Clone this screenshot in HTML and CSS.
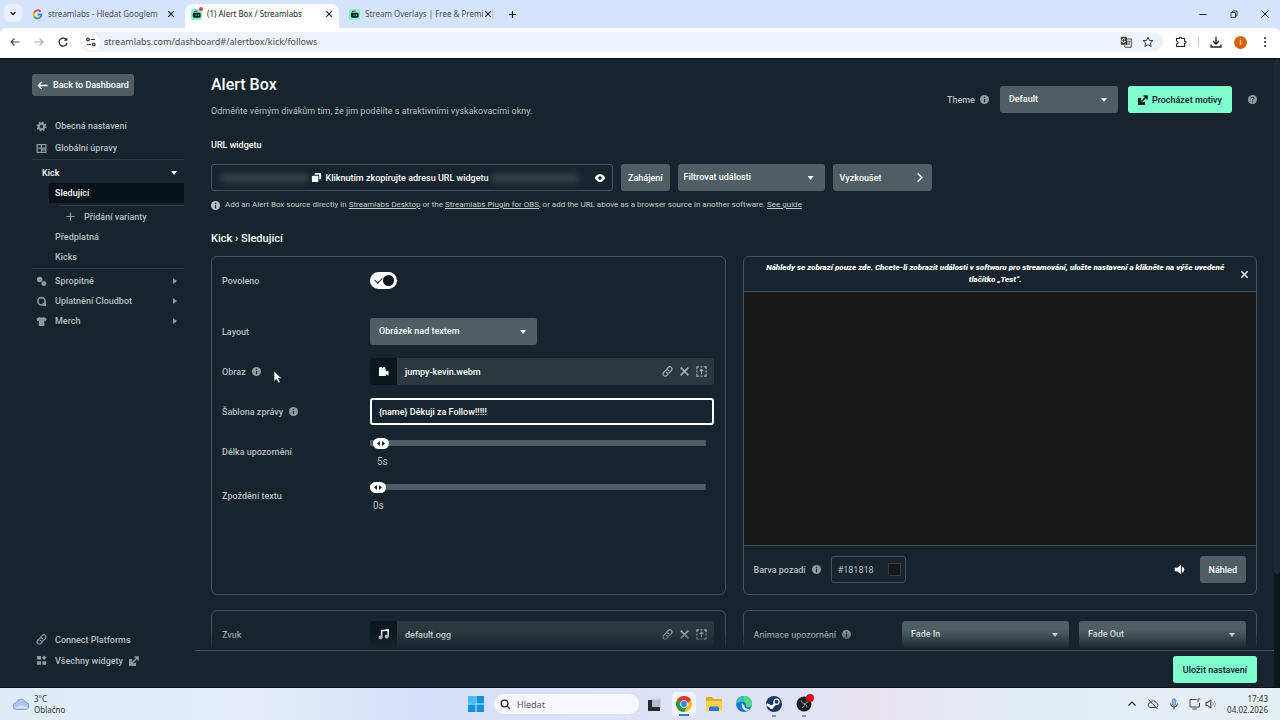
FILE: index.html
```html
<!DOCTYPE html>
<html lang="cs">
<head>
<meta charset="utf-8">
<title>Alert Box / Streamlabs</title>
<meta name="viewport" content="width=device-width, initial-scale=1">
<link rel="stylesheet" href="styles.css">
</head>
<body>
<svg class="defs" aria-hidden="true">
  <symbol id="i-x" viewBox="0 0 10 10"><path d="M1.500 1.500l7 7M8.500 1.500l-7 7" fill="none" stroke="currentColor" stroke-width="1.500"/></symbol>
  <symbol id="i-info" viewBox="0 0 10 10"><circle cx="5" cy="5" r="5" fill="currentColor"/><path d="M5 4.300V8M5 2v1.400" stroke="#17242d" stroke-width="1.300"/></symbol>
  <symbol id="i-link" viewBox="0 0 12 12"><g fill="none" stroke="currentColor" stroke-width="1.300" stroke-linecap="round"><path d="M5.200 3.200l1.500-1.500a2.300 2.300 0 0 1 3.500 3.200L8 7.200a2.300 2.300 0 0 1-3.300-.3"/><path d="M6.800 8.800l-1.500 1.500a2.300 2.300 0 0 1-3.500-3.200L4 4.800a2.300 2.300 0 0 1 3.300.3"/></g></symbol>
  <symbol id="i-ext" viewBox="0 0 10 10"><path d="M0 3h3.500L2.500 5.500l2 2L7 6.500V10H0z" fill="currentColor"/><path d="M3.500 6.500L8.500 1.500M5.500 1H9v3.500" fill="none" stroke="currentColor" stroke-width="1.500"/></symbol>
  <symbol id="i-frame" viewBox="0 0 12 12"><path d="M1 3.500V1h2.500M5 1h2M8.500 1H11v2.500M11 5v2M11 8.500V11H8.500M7 11H5M3.500 11H1V8.500M1 7V5" fill="none" stroke="currentColor" stroke-width="1.300"/><path d="M6 9V4M4 5.500L6 3.500l2 2" fill="none" stroke="currentColor" stroke-width="1.200"/></symbol>
  <symbol id="i-streamlabs" viewBox="0 0 12 12"><rect width="12" height="12" rx="2" fill="#7ff7cb"/><rect x="2" y="4" width="8.500" height="5.500" rx="1.500" fill="#0c1c22"/><path d="M3 3.500q1-1.500 4-1.200" fill="none" stroke="#0c1c22" stroke-width="1"/><path d="M5.500 6v1.500M8 6v1.500" stroke="#7ff7cb"/></symbol>
</svg>

<header class="browser">
  <div class="tabstrip">
    <button class="tab-search" aria-label="Hledat karty"><svg viewBox="0 0 10 10"><path d="M2.500 4L5 6.500 7.500 4" fill="none" stroke="#222" stroke-width="1.400"/></svg></button>
    <div class="tab tab-google">
      <svg class="favicon" viewBox="0 0 12 12"><g fill="none" stroke-width="2"><path d="M9.500 3A4.200 4.200 0 0 0 2.300 4" stroke="#ea4335"/><path d="M2.300 4a4.200 4.200 0 0 0 0 4" stroke="#fbbc05"/><path d="M2.300 8a4.200 4.200 0 0 0 6.400 1.300" stroke="#34a853"/><path d="M8.700 9.300A4.200 4.200 0 0 0 10.200 6H6" stroke="#4285f4"/></g></svg>
      <span class="tab-title">streamlabs - Hledat Googlem</span>
      <button class="tab-close" aria-label="Zavřít kartu"><svg><use href="#i-x"/></svg></button>
    </div>
    <div class="tab tab-active">
      <span class="favicon badge-host"><svg class="favicon"><use href="#i-streamlabs"/></svg><i class="fav-badge"></i></span>
      <span class="tab-title">(1) Alert Box / Streamlabs</span>
      <button class="tab-close" aria-label="Zavřít kartu"><svg><use href="#i-x"/></svg></button>
    </div>
    <div class="tab tab-third">
      <svg class="favicon"><use href="#i-streamlabs"/></svg>
      <span class="tab-title">Stream Overlays | Free &amp; Premi</span>
      <button class="tab-close" aria-label="Zavřít kartu"><svg><use href="#i-x"/></svg></button>
    </div>
    <button class="new-tab" aria-label="Nová karta"><svg viewBox="0 0 10 10"><path d="M5 1v8M1 5h8" stroke="#222" stroke-width="1.300"/></svg></button>
    <div class="window-buttons">
      <button aria-label="Minimalizovat"><svg viewBox="0 0 10 10"><path d="M1.500 5.500h7" stroke="#222"/></svg></button>
      <button aria-label="Obnovit"><svg viewBox="0 0 10 10"><path d="M2 3.500h4.500V8.500H2zM3.500 3.500V2H8v5H6.500" fill="none" stroke="#222" stroke-width=".8"/></svg></button>
      <button aria-label="Zavřít"><svg viewBox="0 0 10 10"><path d="M1.500 1.500l7 7M8.500 1.500l-7 7" stroke="#222"/></svg></button>
    </div>
  </div>
  <div class="toolbar">
    <button aria-label="Zpět"><svg viewBox="0 0 12 12"><path d="M10.500 6H2M5.500 2.500L2 6l3.500 3.500" fill="none" stroke="#444" stroke-width="1.200"/></svg></button>
    <button aria-label="Vpřed"><svg viewBox="0 0 12 12"><path d="M1.500 6H10M6.500 2.500L10 6 6.500 9.500" fill="none" stroke="#a9abb0" stroke-width="1.100"/></svg></button>
    <button aria-label="Načíst znovu"><svg viewBox="0 0 12 12"><path d="M9.500 4A4 4 0 1 0 10 7" fill="none" stroke="#222" stroke-width="1.300"/><path d="M10.300 1.500v3.300H7z" fill="#222"/></svg></button>
    <div class="omnibox">
      <button class="site-info" aria-label="Informace o webu"><svg viewBox="0 0 12 12"><g fill="none" stroke="#333" stroke-width="1.200"><circle cx="3" cy="3.500" r="1.300"/><path d="M5.800 3.500H10M2 8.500h4"/><circle cx="8.800" cy="8.500" r="1.300"/></g></svg></button>
      <input class="address" aria-label="Adresa" value="streamlabs.com/dashboard#/alertbox/kick/follows">
      <button aria-label="Přeložit"><svg viewBox="0 0 12 12"><path d="M.8.8h6l1 8h-7z" fill="#444"/><path d="M7 3h4.300v8.300H5l-.5-2" fill="none" stroke="#555"/><path d="M5 3.500A1.800 1.800 0 1 0 5.300 5.300H4" fill="none" stroke="#fff" stroke-width=".9"/><path d="M7.500 5.500h3M9 4.500v1M10 5.500L8 9M8.200 6.500l2 2.500" fill="none" stroke="#555" stroke-width=".7"/></svg></button>
      <button aria-label="Přidat záložku"><svg viewBox="0 0 12 12"><path d="M6 1.200l1.400 3.200 3.500.3-2.600 2.300.8 3.500L6 8.700l-3.100 1.800.8-3.500L1.100 4.700l3.500-.3z" fill="none" stroke="#333"/></svg></button>
    </div>
    <button class="tool-ext" aria-label="Rozšíření"><svg viewBox="0 0 12 12"><path d="M1.500 2.500h3q0-1.500 1-1.500t1 1.500H9.500v2.700q1.700 0 1.700 1.100T9.500 7.500v3h-8V8q1.600-.2 1.600-1.500T1.500 5z" fill="none" stroke="#222" stroke-width="1.100"/></svg></button>
    <span class="tool-sep"></span>
    <button aria-label="Stahování"><svg viewBox="0 0 12 12"><path d="M6 .8v7M3 5l3 3 3-3M1 8.500V11h10V8.500" fill="none" stroke="#222" stroke-width="1.300"/></svg></button>
    <button class="avatar" aria-label="Profil">i</button>
    <button aria-label="Nabídka"><svg viewBox="0 0 12 12"><g fill="#222"><circle cx="6" cy="2" r="1"/><circle cx="6" cy="6" r="1"/><circle cx="6" cy="10" r="1"/></g></svg></button>
  </div>
</header>

<div class="app">
  <aside class="sidebar">
    <button class="btn back-btn"><svg class="ic" viewBox="0 0 12 12"><path d="M11.500 6H1.500M5 2.300L1.500 6 5 9.700" fill="none" stroke="currentColor" stroke-width="1.500"/></svg>Back to Dashboard</button>
    <nav class="nav">
      <a class="nav-item nav-top" href="#"><svg class="ic" viewBox="0 0 12 12"><circle cx="6" cy="6" r="3" fill="none" stroke="currentColor" stroke-width="2.400"/><circle cx="6" cy="6" r="4.700" fill="none" stroke="currentColor" stroke-width="1.500" stroke-dasharray="1.850 1.840"/></svg>Obecná nastavení</a>
      <a class="nav-item nav-top" href="#"><svg class="ic" viewBox="0 0 12 12"><path d="M1.200 1.700h9.600v8.600H1.200zM6 1.700v8.600M1.200 5.500h9.600M6 7.500h4.500" fill="none" stroke="currentColor" stroke-width="1.300"/></svg>Globální úpravy</a>
      <div class="nav-group">
        <a class="nav-item nav-head" href="#">Kick<i class="caret-down"></i></a>
        <div class="nav-sub">
          <a class="nav-item nav-current" href="#">Sledující</a>
          <a class="nav-item nav-variant" href="#"><svg class="ic" viewBox="0 0 12 12"><path d="M6 1.500v9M1.500 6h9" stroke="currentColor" stroke-width="1.300"/></svg>Přidání varianty</a>
          <a class="nav-item" href="#">Předplatná</a>
          <a class="nav-item" href="#">Kicks</a>
        </div>
      </div>
      <a class="nav-item" href="#"><svg class="ic" viewBox="0 0 12 12"><circle cx="4" cy="3.800" r="3" fill="currentColor"/><circle cx="8.500" cy="8.300" r="3" fill="currentColor" stroke="#17242d" stroke-width=".6"/></svg>Spropitné<i class="caret-right"></i></a>
      <a class="nav-item" href="#"><svg class="ic" viewBox="0 0 12 12"><circle cx="6" cy="5.800" r="4" fill="none" stroke="currentColor" stroke-width="1.800"/><path d="M7 7.500h4v3.500H8z" fill="currentColor"/></svg>Uplatnění Cloudbot<i class="caret-right"></i></a>
      <a class="nav-item" href="#"><svg class="ic" viewBox="0 0 12 12"><path d="M4 1q2 1.500 4 0l3.500 1.800-1 3L9 5.300V11H3V5.300l-1.500.5-1-3z" fill="currentColor"/></svg>Merch<i class="caret-right"></i></a>
    </nav>
    <nav class="nav nav-bottom">
      <a class="nav-item nav-low" href="#"><svg class="ic"><use href="#i-link"/></svg>Connect Platforms</a>
      <a class="nav-item nav-low" href="#"><svg class="ic" viewBox="0 0 12 12"><path d="M1 1h4.500v4H1zM9 .5L11.500 3 9 5.500 6.500 3zM1 6.700h4.500v4H1zM7 6.700h4v4H7z" fill="currentColor"/></svg>Všechny widgety<svg class="ic ic-ext"><use href="#i-ext"/></svg></a>
    </nav>
  </aside>

  <main class="main">
    <div class="content">
      <div class="head">
        <div>
          <h1>Alert Box</h1>
          <p class="subtitle">Odměňte věrným divákům tím, že jim podělíte s atraktivními vyskakovacími okny.</p>
        </div>
        <div class="theme">
          <label class="label" for="theme">Theme</label><svg class="info"><use href="#i-info"/></svg>
          <span class="select select-theme"><select id="theme"><option>Default</option></select></span>
          <button class="btn btn-green"><svg class="ic-small"><use href="#i-ext"/></svg>Procházet motivy</button>
          <svg class="info help" viewBox="0 0 10 10"><circle cx="5" cy="5" r="5" fill="currentColor"/><path d="M3.500 4q0-1.600 1.500-1.600T6.500 3.800Q6.500 4.600 5 5.300v.7M5 7v1.200" fill="none" stroke="#17242d" stroke-width="1.100"/></svg>
        </div>
      </div>

      <h2 class="field-title">URL widgetu</h2>
      <div class="url-row">
        <div class="url-box">
          <span class="smudge"></span>
          <button class="copy"><svg class="ic" viewBox="0 0 12 12"><path d="M4 1h7v7H9V3H4z" fill="currentColor"/><rect x="1" y="4" width="7" height="7" rx="1" fill="currentColor"/></svg>Kliknutím zkopírujte adresu URL widgetu</button>
          <span class="smudge"></span>
          <button class="eye" aria-label="Zobrazit"><svg viewBox="0 0 12 12"><path d="M.8 6Q3 2 6 2t5.200 4Q9 10 6 10T.8 6z" fill="#fff"/><circle cx="6" cy="6" r="1.800" fill="#17242d"/></svg></button>
        </div>
        <button class="btn">Zahájení</button>
        <span class="select select-filter"><select aria-label="Filtrovat události"><option>Filtrovat události</option></select></span>
        <button class="btn btn-try">Vyzkoušet<svg class="ic" viewBox="0 0 12 12"><path d="M4 1.500L8.500 6 4 10.500" fill="none" stroke="currentColor" stroke-width="1.600"/></svg></button>
      </div>
      <p class="hint"><svg class="info"><use href="#i-info"/></svg><span>Add an Alert Box source directly in <a href="#">Streamlabs Desktop</a> or the <a href="#">Streamlabs Plugin for OBS</a>, or add the URL above as a browser source in another software. <a href="#">See guide</a></span></p>

      <h2 class="crumbs">Kick › Sledující</h2>

      <div class="cards">
        <section class="card settings">
          <label class="label" for="enabled">Povoleno</label>
          <div class="row-enabled"><input id="enabled" class="toggle" type="checkbox" checked></div>
          <label class="label" for="layout">Layout</label>
          <div><span class="select select-layout"><select id="layout"><option>Obrázek nad textem</option></select></span></div>
          <div class="label">Obraz<svg class="info"><use href="#i-info"/></svg></div>
          <div class="file">
            <span class="file-type"><svg class="ic" viewBox="0 0 12 12"><circle cx="3" cy="2.500" r="1.800" fill="#fff"/><circle cx="6.500" cy="2.500" r="1.500" fill="#fff"/><path d="M1 3.500h7.500v2.500L11.500 4.800v5.500L8.500 9v2H1z" fill="#fff"/></svg></span>
            <span class="file-name">jumpy-kevin.webm</span>
            <button aria-label="Odkaz"><svg><use href="#i-link"/></svg></button>
            <button aria-label="Odebrat"><svg><use href="#i-x"/></svg></button>
            <button aria-label="Vybrat"><svg><use href="#i-frame"/></svg></button>
          </div>
          <div class="label"><label for="template">Šablona zprávy</label><svg class="info"><use href="#i-info"/></svg></div>
          <div><input id="template" class="text-input" value="{name} Děkuji za Follow!!!!!" spellcheck="false"></div>
          <label class="label" for="duration">Délka upozornění</label>
          <div class="slide"><input id="duration" type="range" min="2" max="300" value="5"><output class="val-duration">5s</output></div>
          <label class="label" for="delay">Zpoždění textu</label>
          <div class="slide"><input id="delay" type="range" min="0" max="60" value="0"><output>0s</output></div>
        </section>

        <section class="card preview">
          <div class="preview-note"><em>Náhledy se zobrazí pouze zde. Chcete-li zobrazit události v softwaru pro streamování, uložte nastavení a klikněte na výše uvedené tlačítko „Test“.</em><button aria-label="Zavřít"><svg><use href="#i-x"/></svg></button></div>
          <div class="preview-canvas"></div>
          <div class="preview-bar">
            <label class="label" for="bg">Barva pozadí</label><svg class="info"><use href="#i-info"/></svg>
            <span class="color-box"><input id="bg" value="#181818"><i class="swatch"></i></span>
            <button class="sound" aria-label="Zvuk"><svg viewBox="0 0 12 12"><path d="M.8 4h2.700L7.500.8v10.400L3.500 8H.8z" fill="#fff"/><path d="M8.500 2.500q2.700.8 2.700 3.500T8.500 9.500z" fill="#fff"/></svg></button>
            <button class="btn">Náhled</button>
          </div>
        </section>

        <section class="card settings">
          <div class="label">Zvuk</div>
          <div class="file">
            <span class="file-type"><svg class="ic" viewBox="0 0 12 12"><path d="M4 9.300V1.800L11 1v7.500" fill="none" stroke="#fff" stroke-width="1.800"/><circle cx="2.800" cy="9.200" r="2.200" fill="#fff"/><circle cx="9.500" cy="8.500" r="2.200" fill="#fff"/></svg></span>
            <span class="file-name">default.ogg</span>
            <button aria-label="Odkaz"><svg><use href="#i-link"/></svg></button>
            <button aria-label="Odebrat"><svg><use href="#i-x"/></svg></button>
            <button aria-label="Vybrat"><svg><use href="#i-frame"/></svg></button>
          </div>
        </section>

        <section class="card animation">
          <div class="label">Animace upozornění<svg class="info"><use href="#i-info"/></svg></div>
          <span class="select"><select aria-label="Animace zobrazení"><option>Fade In</option></select></span>
          <span class="select"><select aria-label="Animace skrytí"><option>Fade Out</option></select></span>
        </section>
      </div>
    </div>
    <footer class="savebar"><button class="btn btn-green">Uložit nastavení</button></footer>
  </main>
  <div class="scrollbar"><i></i></div>
  <svg class="cursor" viewBox="0 0 10 14"><path d="M1 1v10.500l2.500-2.300L5.200 13l2-.9-1.700-3.600H9z" fill="#fff" stroke="#222" stroke-width=".7"/></svg>
</div>

<footer class="taskbar">
  <div class="weather">
    <svg viewBox="0 0 18 14"><path d="M4.500 12.500a3.500 3.500 0 0 1 0-7A4.800 4.800 0 0 1 13.500 5a3.800 3.800 0 0 1 .3 7.500z" fill="#a9c4ee" stroke="#86a5d8"/><path d="M3 10.500q5-3.500 12.500-1v2H4z" fill="#cfdffa"/></svg>
    <p>3°C<br>Oblačno</p>
  </div>
  <div class="dock">
    <button class="app-icon" aria-label="Start"><svg viewBox="0 0 16 16"><path d="M0 0h7.500v7.500H0zM8.500 0H16v7.500H8.500zM0 8.500h7.500V16H0zM8.500 8.500H16V16H8.500z" fill="#1593d9"/><path d="M0 0h7.500v7.500H0z" fill="#46bdf0"/></svg></button>
    <label class="search"><svg viewBox="0 0 12 12"><circle cx="5" cy="5" r="3.700" fill="none" stroke="#222" stroke-width="1.400"/><path d="M7.800 7.800L11 11" stroke="#222" stroke-width="1.400"/></svg><input placeholder="Hledat" aria-label="Hledat"></label>
    <button class="app-icon" aria-label="Zobrazení úloh"><svg viewBox="0 0 16 16"><rect x="5" y="2" width="10" height="9" fill="#d3d5d8"/><path d="M2 4h4v7h8v4H2z" fill="#222a33"/><rect x="6" y="4" width="8" height="7" fill="#b9bcc2"/></svg></button>
    <button class="app-icon app-chrome" aria-label="Chrome"><svg viewBox="0 0 16 16"><circle cx="8" cy="8" r="8" fill="#fbc116"/><path d="M8 8L1.100 4A8 8 0 0 1 14.900 4z" fill="#dc3b2e"/><path d="M8 8L1.100 4A8 8 0 0 0 8 16L11.500 10z" fill="#279847"/><path d="M4.500 5.500L8 4h6.900L12 7z" fill="#dc3b2e"/><circle cx="8" cy="8" r="3.800" fill="#fff"/><circle cx="8" cy="8" r="2.900" fill="#3f7ee8"/></svg></button>
    <button class="app-icon" aria-label="Průzkumník"><svg viewBox="0 0 16 16"><path d="M0 2q0-1 1-1h4.500l2 2H15q1 0 1 1v10H0z" fill="#e5ab22"/><path d="M0 5h16v9q0 1-1 1H1q-1 0-1-1z" fill="#fbd24f"/><path d="M3 15v-3q0-1.500 1.500-1.500h7Q13 10.500 13 12v3z" fill="#2a78c9"/></svg></button>
    <button class="app-icon" aria-label="Edge"><svg viewBox="0 0 16 16"><circle cx="8" cy="8" r="8" fill="#1479cc"/><path d="M0 8a8 8 0 0 1 16 0q0 3-3.500 3-2.500 0-2.500-1.300Q10.500 6 7.500 5.700 3 5.300 0 8z" fill="#35c5b8"/><path d="M8 0a8 8 0 0 1 8 8q0 3-3.500 3-2.500 0-2.500-1.300 1-3-2-4z" fill="#5bd982"/><path d="M6 7q-1.500 5 3 7.500 3 .8 5.300-1.500-5 1-6-3.500z" fill="#d7e3f7"/></svg></button>
    <button class="app-icon app-running" aria-label="Steam"><svg viewBox="0 0 16 16"><circle cx="8" cy="8" r="8" fill="#163861"/><path d="M.5 8.500L6 11 9 8" fill="none" stroke="#fff" stroke-width="2.500"/><circle cx="10.500" cy="5.800" r="2.600" fill="#163861" stroke="#fff" stroke-width="1.300"/><circle cx="5.500" cy="11" r="2" fill="#fff"/></svg></button>
    <button class="app-icon app-running badge-host" aria-label="OBS"><svg viewBox="0 0 16 16"><circle cx="8" cy="8" r="7.500" fill="#1d1c1f"/><path d="M5 4.500q1 3 3.500 3T12 5.500M8.500 7.500Q9 11 6 12M8.500 7.500q2.500 1.500 2.500 4" fill="none" stroke="#a5a5aa" stroke-width=".9"/></svg><i class="obs-badge"></i></button>
  </div>
  <div class="tray">
    <svg viewBox="0 0 12 12"><path d="M2.500 7.500L6 4l3.500 3.500" fill="none" stroke="#222" stroke-width="1.200"/></svg>
    <svg viewBox="0 0 12 12"><path d="M3 9.500A2.500 2.500 0 0 1 3 4.700Q4 2.500 6.500 2.700T9.300 5Q11.300 5.500 11 7.500T9 9.500zM1.500 1.500l9 9.500" fill="none" stroke="#444"/></svg>
    <svg viewBox="0 0 12 12"><rect x="4.300" y=".8" width="3.400" height="6.500" rx="1.700" fill="#8ab6ec" stroke="#3b7cc4" stroke-width=".8"/><path d="M2.500 5.500Q2.700 9 6 9t3.500-3.500M6 9v2.500" fill="none" stroke="#333"/></svg>
    <svg viewBox="0 0 12 12"><path d="M7.500 1.500H1v7.500h9.500V5M3.500 11h4.500M9 4V1h2.500" fill="none" stroke="#444"/></svg>
    <svg viewBox="0 0 12 12"><path d="M1 4.300h2L5.800 2v8L3 7.700H1z" fill="none" stroke="#333"/><path d="M7.500 4.300q1.300 1.700 0 3.400M9.200 2.800q2.500 3.200 0 6.400" fill="none" stroke="#999"/></svg>
    <p class="clock">17:43<br>04.02.2026</p>
  </div>
</footer>
</body>
</html>
```
FILE: styles.css
```css
* { box-sizing: border-box; }

:root {
  --bg: #17242d;
  --control: #4f5e65;
  --line: #43525a;
  --label: #b5bec2;
  --icon: #8f9a9f;
  --green: #80ffcf;
}

body {
  margin: 0;
  height: 100vh;
  display: flex;
  flex-direction: column;
  overflow: hidden;
  background: var(--bg);
  color: #fff;
  font: 9px/12px Roboto, "Liberation Sans", sans-serif;
}

.defs { display: none; }
button, input, select { font: inherit; color: inherit; }
button { border: 0; padding: 0; background: none; display: flex; align-items: center; justify-content: center; }
h1, h2, p { margin: 0; }
a { color: inherit; }
svg { display: block; flex: none; }

/* Browser window */
.browser { flex: none; background: #d6e3fc; color: #4b4f56; font: 8px/12px "Noto Sans", sans-serif; }
.tabstrip { display: flex; height: 28px; padding-left: 4px; }
.tab-search { width: 18px; height: 18px; margin: 4px 8px 0 0; border-radius: 6px; background: #e9f0fe; }
.tab-search svg { width: 10px; height: 10px; }
.tab { display: flex; align-items: center; width: 154px; }
.tab-google { width: 155px; padding: 0 9px 0 2px; }
.tab-active { margin-top: 4px; padding: 0 5px 4px 6px; background: #fff; border-radius: 8px 8px 0 0; color: #222; }
.tab-third { padding-left: 10px; border-right: 1px solid; border-image: linear-gradient(transparent 30%, #b4c3e0 30% 68%, transparent 68%) 1; }
.favicon { width: 11px; height: 11px; margin-right: 5px; flex: none; }
.badge-host { position: relative; }
.badge-host > .favicon { margin: 0; }
.fav-badge { position: absolute; top: -2px; right: -1px; width: 4px; height: 4px; border-radius: 50%; background: #e63c4c; }
.tab-title { flex: 1; white-space: nowrap; }
.tab-close { width: 10px; color: #222; }
.tab-close svg { width: 8px; height: 8px; }
.new-tab { width: 38px; }
.new-tab svg { width: 9px; height: 9px; }
.window-buttons { display: flex; margin-left: auto; }
.window-buttons button { width: 31px; }
.window-buttons svg { width: 10px; height: 10px; }

.toolbar { display: flex; align-items: center; height: 30px; padding: 0 3px 2px; background: #fff; border-radius: 6px 6px 0 0; }
.toolbar button { width: 24px; height: 20px; }
.toolbar button svg { width: 12px; height: 12px; }
.omnibox { flex: 1; display: flex; align-items: center; height: 20px; padding: 0 4px 0 2px; margin: 0 6px 0 5px; border-radius: 10px; background: #edf1fa; }
.omnibox button { width: 22px; }
.toolbar .site-info { width: 18px; height: 18px; border-radius: 50%; background: #fff; }
.address { flex: 1; min-width: 0; border: 0; padding: 0 0 0 4px; background: none; outline: 0; font-size: 9px; }
.tool-sep { width: 1px; height: 10px; margin: 0 5px; background: #b9c6dd; }
.toolbar .avatar { width: 13px; height: 13px; margin: 0 6px; border-radius: 50%; background: #d9600c; color: #fff; }

/* Application shell */
.app { position: relative; flex: 1; min-height: 0; display: flex; border-top: 1px solid #0a1218; border-bottom: 1px solid #0a1218; }
.sidebar { flex: none; width: 195px; padding: 15px 11px 16px 32px; display: flex; flex-direction: column; align-items: stretch; }
.main { flex: 1; min-width: 0; display: flex; flex-direction: column; }
.content { position: relative; flex: 1; min-height: 0; overflow: hidden; padding: 17px 17px 0 16px; }
.content::after { content: ""; position: absolute; left: 0; right: 0; bottom: 0; height: 20px; background: linear-gradient(transparent, var(--bg)); pointer-events: none; }
.savebar { flex: none; display: flex; justify-content: flex-end; padding: 5px 17px 4px; border-top: 1px solid var(--line); }
.scrollbar { flex: none; width: 6px; background: #0b161d; }
.scrollbar i { display: block; height: 82%; border-radius: 3px; background: #1b2932; }
.cursor { position: absolute; left: 273px; top: 311px; width: 10px; height: 14px; }

/* Shared controls */
.ic { width: 11px; height: 11px; }
.ic-small { width: 10px; height: 10px; }
.info { width: 9px; height: 9px; color: var(--icon); }
.btn { height: 27px; padding: 0 7px; border-radius: 3px; background: var(--control); font-weight: 500; white-space: nowrap; }
.btn-green { padding: 0 10px; gap: 4px; background: var(--green); color: #09161d; }
.label { display: flex; align-items: center; gap: 6px; color: var(--label); font-weight: 500; }
.select { position: relative; display: block; height: 27px; border-radius: 3px; background: var(--control); }
.select select { appearance: none; width: 100%; height: 25px; padding: 0 20px 0 9px; border: 0; background: none; color: #fff; font-weight: 500; }
.select::after, .caret-down { content: ""; width: 6px; height: 4px; background: #fff; clip-path: polygon(0 0, 100% 0, 50% 100%); }
.select::after { position: absolute; right: 11px; top: 12px; }

/* Sidebar */
.back-btn { align-self: flex-start; height: 22px; gap: 5px; padding: 0 5px; }
.nav { display: flex; flex-direction: column; margin-top: 19px; font-weight: 500; }
.nav-item { display: flex; align-items: center; height: 20px; padding: 0 7px 0 4px; gap: 8px; color: var(--label); text-decoration: none; }
.nav-item .ic { color: var(--icon); }
.nav-top { height: 22px; }
.nav-group { border-top: 1px solid #2e3c44; border-bottom: 1px solid #2e3c44; padding: 3px 0 1px; margin: 0 0 2px; }
.nav-head { padding-left: 10px; color: #fff; justify-content: space-between; }
.nav-sub { display: flex; flex-direction: column; padding-left: 17px; }
.nav-sub .nav-item { padding-left: 6px; }
.nav-sub .nav-current { background: #091319; color: #fff; }
.nav-sub .nav-variant { margin: 2px 0 0 10px; height: 22px; border-top: 1px solid #2e3c44; }
.caret-right { width: 4px; height: 6px; margin-left: auto; background: var(--icon); clip-path: polygon(0 0, 100% 50%, 0 100%); }
.nav-bottom { margin-top: auto; }
.nav-low { height: 21px; }
.nav-item .ic-ext { margin-left: -2px; width: 10px; height: 10px; }

/* Page heading */
.head { display: flex; justify-content: space-between; }
h1 { font-size: 16px; line-height: 18px; font-weight: 500; }
.subtitle { margin-top: 11px; color: #b5bec2; }
.theme { display: flex; align-items: center; height: 27px; margin-top: 10px; }
.theme .info { margin: 0 11px 0 5px; }
.select-theme { width: 118px; margin-right: 10px; }
.theme .help { margin: 0 0 0 16px; }
.field-title { margin-top: 21px; font-size: 9px; line-height: 14px; font-weight: 500; }
.url-row { display: flex; gap: 8px; margin-top: 12px; }
.url-box { width: 402px; height: 27px; display: flex; align-items: center; padding: 0 6px; border: 1px solid var(--line); border-radius: 3px; }
.smudge { flex: 1; height: 8px; margin: 0 2px; border-radius: 4px; background: #4d5960; filter: blur(3px); opacity: .6; }
.copy { gap: 4px; font-weight: 500; }
.eye { width: 13px; margin-left: 12px; }
.eye svg { width: 12px; height: 12px; }
.select-filter { width: 147px; }
.select-filter select { padding-left: 6px; }
.btn-try { width: 99px; padding: 0 7px; justify-content: space-between; }
.hint { display: flex; align-items: center; gap: 5px; margin-top: 8px; font-size: 8px; line-height: 12px; color: #c3cbce; }
.hint .info { color: #b5bec2; }
.crumbs { margin-top: 21px; font-size: 11px; line-height: 14px; font-weight: 500; }

/* Cards */
.cards { display: grid; grid-template-columns: 1fr 1fr; column-gap: 17px; row-gap: 15px; margin-top: 10px; }
.card { border: 1px solid var(--line); border-radius: 6px; min-width: 0; }
.settings { display: grid; grid-template-columns: 138px 1fr; column-gap: 10px; row-gap: 13px; align-content: start; padding: 10px 11px 10px 10px; }
.row-enabled { height: 38px; padding-top: 5px; }
.settings > .label { height: 27px; }
.toggle { appearance: none; display: block; position: relative; width: 27px; height: 17px; margin: 0; border-radius: 9px; background: #fff; }
.toggle::before { content: ""; position: absolute; left: 5px; top: 5px; width: 6px; height: 4px; border: solid #17242d; border-width: 0 0 1px 1px; transform: rotate(-45deg); }
.toggle::after { content: ""; position: absolute; right: 3px; top: 3px; width: 11px; height: 11px; border-radius: 50%; background: #09161d; }
.select-layout { width: 167px; }
.file { display: flex; align-items: center; height: 27px; padding-right: 4px; border-radius: 3px; overflow: hidden; background: #2b3840; color: #fff; }
.file-type { width: 27px; height: 27px; display: flex; align-items: center; justify-content: center; background: #09161d; }
.file-name { flex: 1; padding-left: 8px; font-weight: 500; }
.file button { width: 17px; color: #a3adb1; }
.file button svg { width: 11px; height: 11px; }
.text-input { display: block; width: 100%; height: 27px; padding: 0 7px; border: 2px solid #fff; border-radius: 3px; background: #17242d; outline: 0; font-weight: 500; }
.slide { height: 31px; padding-right: 8px; }
.slide input { appearance: none; display: block; width: 100%; height: 10px; margin: 0; background: linear-gradient(var(--control), var(--control)) center / 100% 6px no-repeat; border-radius: 3px; }
.slide input::-webkit-slider-thumb { appearance: none; width: 16px; height: 11px; border-radius: 6px; background: #fff url("data:image/svg+xml,%3Csvg xmlns='http://www.w3.org/2000/svg' viewBox='0 0 16 11'%3E%3Cpath d='M7 3v5L4 5.500zM9 3v5l3-2.500z' fill='%2317242d'/%3E%3C/svg%3E") center no-repeat; }
.slide output { display: block; margin-top: 8px; padding-left: 3px; color: var(--label); font-size: 10px; }
.slide .val-duration { padding-left: 7px; }

.preview { display: flex; flex-direction: column; }
.preview-note { display: flex; align-items: center; padding: 5px 7px; border-bottom: 1px solid var(--line); font-size: 8px; font-weight: 900; line-height: 12px; text-align: center; }
.preview-note em { flex: 1; padding: 0 8px; }
.preview-note svg { width: 9px; height: 9px; }
.preview-canvas { flex: 1; min-height: 253px; background: #181818; }
.preview-bar { display: flex; align-items: center; padding: 10px 10px 11px; border-top: 1px solid var(--line); }
.preview-bar .info { margin: 0 10px 0 6px; }
.color-box { display: flex; align-items: center; width: 75px; height: 27px; padding: 0 4px 0 6px; border: 1px solid var(--line); border-radius: 3px; color: var(--label); }
.color-box input { flex: 1; min-width: 0; width: 0; padding: 0; border: 0; background: none; outline: 0; }
.swatch { width: 13px; height: 13px; background: #181818; border: 1px solid #33393c; }
.sound { margin: 0 15px 0 auto; }
.sound svg { width: 11px; height: 11px; }
.preview-bar .btn { padding: 0 9px; }

.animation { display: grid; grid-template-columns: 1fr 167px 167px; column-gap: 10px; padding: 10px; }

/* Desktop taskbar */
.taskbar { flex: none; display: grid; grid-template-columns: 1fr auto 1fr; align-items: center; height: 32px; padding: 0 12px; background: linear-gradient(90deg, #dfebf8, #e6edf9 20%, #d7dffa 32%, #e0e3f4 62%, #eae4ef 68%, #e4edf6 80%, #e6eef6); color: #333; font: 8px/11px "Noto Sans", sans-serif; }
.weather { display: flex; align-items: center; gap: 4px; }
.weather svg { width: 18px; height: 14px; }
.dock { display: flex; align-items: center; padding-left: 7px; }
.app-icon { width: 30px; height: 32px; }
.app-icon svg { width: 16px; height: 16px; }
.dock > .app-icon:first-child { width: 16px; margin-right: 10px; }
.search { display: flex; align-items: center; gap: 6px; width: 145px; height: 20px; padding: 0 6px; border-radius: 10px; background: #f6f8fe; }
.search svg { width: 11px; height: 11px; }
.search input { width: 100%; min-width: 0; padding: 0; border: 0; background: none; outline: 0; font-size: 9px; }
.search input::placeholder { color: #555; }
.app-chrome { width: 24px; height: 24px; margin: 0 3px; border-radius: 4px; background: linear-gradient(#2f7fc8, #2f7fc8) 50% 100% / 10px 2px no-repeat #f1f4fd; }
.app-running { background: linear-gradient(#8b8f98, #8b8f98) 50% 27px / 4px 2px no-repeat; }
.obs-badge { position: absolute; top: 6px; right: 5px; width: 8px; height: 8px; border-radius: 50%; background: #d60a1c; }
.tray { display: flex; align-items: center; justify-content: flex-end; gap: 9px; }
.tray svg { width: 12px; height: 12px; }
.tray svg:nth-child(5) { margin-left: -5px; }
.clock { text-align: right; margin-left: 1px; }
```
